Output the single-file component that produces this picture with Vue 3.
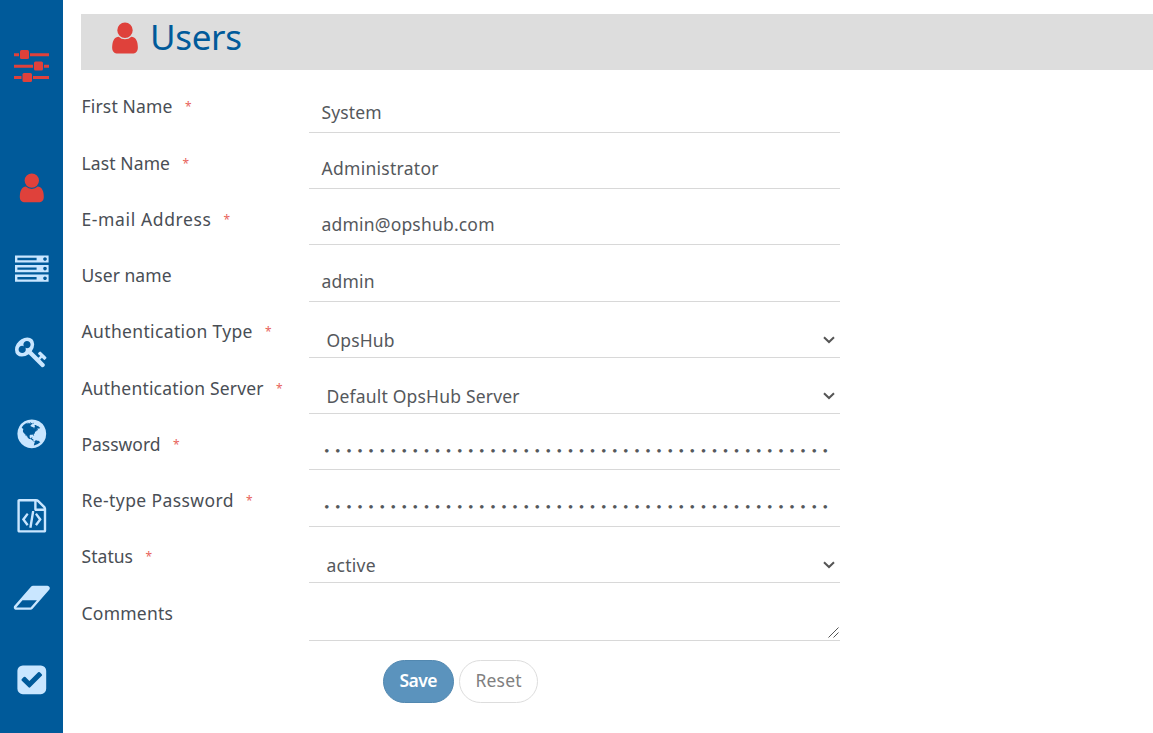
<script setup>
const icons = {
  user: 'M1536 1399q0 109-62.5 187t-150.5 78h-854q-88 0-150.5-78t-62.5-187q0-85 8.5-160.5t31.5-152 58.5-131 94-89 134.5-34.5q131 128 313 128t313-128q76 0 134.5 34.5t94 89 58.5 131 31.5 152 8.5 160.5zm-256-887q0 159-112.5 271.5t-271.5 112.5-271.5-112.5-112.5-271.5 112.5-271.5 271.5-112.5 271.5 112.5 112.5 271.5z',
  server: 'M128 1408h1024v-128h-1024v128zm0-512h1024v-128h-1024v128zm1568 448q0-40-28-68t-68-28-68 28-28 68 28 68 68 28 68-28 28-68zm-1568-960h1024v-128h-1024v128zm1568 448q0-40-28-68t-68-28-68 28-28 68 28 68 68 28 68-28 28-68zm0-512q0-40-28-68t-68-28-68 28-28 68 28 68 68 28 68-28 28-68zm96 832v384h-1792v-384h1792zm0-512v384h-1792v-384h1792zm0-512v384h-1792v-384h1792z',
  key: 'M832 512q0-80-56-136t-136-56-136 56-56 136q0 42 19 83-41-19-83-19-80 0-136 56t-56 136 56 136 136 56 136-56 56-136q0-42-19-83 41 19 83 19 80 0 136-56t56-136zm851 704q0 17-49 66t-66 49q-9 0-28.5-16t-36.5-33-38.5-40-24.5-26l-96 96 220 220q28 28 28 68 0 42-39 81t-81 39q-40 0-68-28l-671-671q-176 131-365 131-163 0-265.5-102.5t-102.5-265.5q0-160 95-313t248-248 313-95q163 0 265.5 102.5t102.5 265.5q0 189-131 365l355 355 96-96q-3-3-26-24.5t-40-38.5-33-36.5-16-28.5q0-17 49-66t66-49q13 0 23 10 6 6 46 44.5t82 79.5 86.5 86 73 78 28.5 41z',
  globe: 'M896 128q209 0 385.5 103t279.5 279.5 103 385.5-103 385.5-279.5 279.5-385.5 103-385.5-103-279.5-279.5-103-385.5 103-385.5 279.5-279.5 385.5-103zm274 521q-2 1-9.5 9.5t-13.5 9.5q2 0 4.5-5t5-11 3.5-7q6-7 22-15 14-6 52-12 34-8 51 11-2-2 9.5-13t14.5-12q3-2 15-4.5t15-7.5l2-22q-12 1-17.5-7t-6.5-21q0 2-6 8 0-7-4.5-8t-11.5 1-9 1q-10-3-15-7.5t-8-16.5-4-15q-2-5-9.5-11t-9.5-10q-1-2-2.5-5.5t-3-6.5-4-5.5-5.5-2.5-7 5-7.5 10-4.5 5q-3-2-6-1.5t-4.5 1-4.5 3-5 3.5q-3 2-8.5 3t-8.5 2q15-5-1-11-10-4-16-3 9-4 7.5-12t-8.5-14h5q-1-4-8.5-8.5t-17.5-8.5-13-6q-8-5-34-9.5t-33-.5q-5 6-4.5 10.5t4 14 3.5 12.5q1 6-5.5 13t-6.5 12q0 7 14 15.5t10 21.5q-3 8-16 16t-16 12q-5 8-1.5 18.5t10.5 16.5q2 2 1.5 4t-3.5 4.5-5.5 4-6.5 3.5l-3 2q-11 5-20.5-6t-13.5-26q-7-25-16-30-23-8-29 1-5-13-41-26-25-9-58-4 6-1 0-15-7-15-19-12 3-6 4-17.5t1-13.5q3-13 12-23 1-1 7-8.5t9.5-13.5.5-6q35 4 50-11 5-5 11.5-17t10.5-17q9-6 14-5.5t14.5 5.5 14.5 5q14 1 15.5-11t-7.5-20q12 1 3-17-4-7-8-9-12-4-27 5-8 4 2 8-1-1-9.5 10.5t-16.5 17.5-16-5q-1-1-5.5-13.5t-9.5-13.5q-8 0-16 15 3-8-11-15t-24-8q19-12-8-27-7-4-20.5-5t-19.5 4q-5 7-5.5 11.5t5 8 10.5 5.5 11.5 4 8.5 3q14 10 8 14-2 1-8.5 3.5t-11.5 4.5-6 4q-3 4 0 14t-2 14q-5-5-9-17.5t-7-16.5q7 9-25 6l-10-1q-4 0-16 2t-20.5 1-13.5-8q-4-8 0-20 1-4 4-2-4-3-11-9.5t-10-8.5q-46 15-94 41 6 1 12-1 5-2 13-6.5t10-5.5q34-14 42-7l5-5q14 16 20 25-7-4-30-1-20 6-22 12 7 12 5 18-4-3-11.5-10t-14.5-11-15-5q-16 0-22 1-146 80-235 222 7 7 12 8 4 1 5 9t2.5 11 11.5-3q9 8 3 19 1-1 44 27 19 17 21 21 3 11-10 18-1-2-9-9t-9-4q-3 5 .5 18.5t10.5 12.5q-7 0-9.5 16t-2.5 35.5-1 23.5l2 1q-3 12 5.5 34.5t21.5 19.5q-13 3 20 43 6 8 8 9 3 2 12 7.5t15 10 10 10.5q4 5 10 22.5t14 23.5q-2 6 9.5 20t10.5 23q-1 0-2.5 1t-2.5 1q3 7 15.5 14t15.5 13q1 3 2 10t3 11 8 2q2-20-24-62-15-25-17-29-3-5-5.5-15.5t-4.5-14.5q2 0 6 1.5t8.5 3.5 7.5 4 2 3q-3 7 2 17.5t12 18.5 17 19 12 13q6 6 14 19.5t0 13.5q9 0 20 10.5t17 19.5q5 8 8 26t5 24q2 7 8.5 13.5t12.5 9.5l16 8 13 7q5 2 18.5 10.5t21.5 11.5q10 4 16 4t14.5-2.5 13.5-3.5q15-2 29 15t21 21q36 19 55 11-2 1 .5 7.5t8 15.5 9 14.5 5.5 8.5q5 6 18 15t18 15q6-4 7-9-3 8 7 20t18 10q14-3 14-32-31 15-49-18 0-1-2.5-5.5t-4-8.5-2.5-8.5 0-7.5 5-3q9 0 10-3.5t-2-12.5-4-13q-1-8-11-20t-12-15q-5 9-16 8t-16-9q0 1-1.5 5.5t-1.5 6.5q-13 0-15-1 1-3 2.5-17.5t3.5-22.5q1-4 5.5-12t7.5-14.5 4-12.5-4.5-9.5-17.5-2.5q-19 1-26 20-1 3-3 10.5t-5 11.5-9 7q-7 3-24 2t-24-5q-13-8-22.5-29t-9.5-37q0-10 2.5-26.5t3-25-5.5-24.5q3-2 9-9.5t10-10.5q2-1 4.5-1.5t4.5 0 4-1.5 3-6q-1-1-4-3-3-3-4-3 7 3 28.5-1.5t27.5 1.5q15 11 22-2 0-1-2.5-9.5t-.5-13.5q5 27 29 9 3 3 15.5 5t17.5 5q3 2 7 5.5t5.5 4.5 5-.5 8.5-6.5q10 14 12 24 11 40 19 44 7 3 11 2t4.5-9.5 0-14-1.5-12.5l-1-8v-18l-1-8q-15-3-18.5-12t1.5-18.5 15-18.5q1-1 8-3.5t15.5-6.5 12.5-8q21-19 15-35 7 0 11-9-1 0-5-3t-7.5-5-4.5-2q9-5 2-16 5-3 7.5-11t7.5-10q9 12 21 2 8-8 1-16 5-7 20.5-10.5t18.5-9.5q7 2 8-2t1-12 3-12q4-5 15-9t13-5l17-11q3-4 0-4 18 2 31-11 10-11-6-20 3-6-3-9.5t-15-5.5q3-1 11.5-.5t10.5-1.5q15-10-7-16-17-5-43 12zm-163 877q206-36 351-189-3-3-12.5-4.5t-12.5-3.5q-18-7-24-8 1-7-2.5-13t-8-9-12.5-8-11-7q-2-2-7-6t-7-5.5-7.5-4.5-8.5-2-10 1l-3 1q-3 1-5.5 2.5t-5.5 3-4 3 0 2.5q-21-17-36-22-5-1-11-5.5t-10.5-7-10-1.5-11.5 7q-5 5-6 15t-2 13q-7-5 0-17.5t2-18.5q-3-6-10.5-4.5t-12 4.5-11.5 8.5-9 6.5-8.5 5.5-8.5 7.5q-3 4-6 12t-5 11q-2-4-11.5-6.5t-9.5-5.5q2 10 4 35t5 38q7 31-12 48-27 25-29 40-4 22 12 26 0 7-8 20.5t-7 21.5q0 6 2 16z',
  code: 'M1596 380q28 28 48 76t20 88v1152q0 40-28 68t-68 28h-1344q-40 0-68-28t-28-68v-1600q0-40 28-68t68-28h896q40 0 88 20t76 48zm-444-244v376h376q-10-29-22-41l-313-313q-12-12-41-22zm384 1528v-1024h-416q-40 0-68-28t-28-68v-416h-768v1536h1280zm-928-896q8-11 21-12.5t24 6.5l51 38q11 8 12.5 21t-6.5 24l-182 243 182 243q8 11 6.5 24t-12.5 21l-51 38q-11 8-24 6.5t-21-12.5l-226-301q-14-19 0-38zm802 301q14 19 0 38l-226 301q-8 11-21 12.5t-24-6.5l-51-38q-11-8-12.5-21t6.5-24l182-243-182-243q-8-11-6.5-24t12.5-21l51-38q11-8 24-6.5t21 12.5zm-620 461q-13-2-20.5-13t-5.5-24l138-831q2-13 13-20.5t24-5.5l63 10q13 2 20.5 13t5.5 24l-138 831q-2 13-13 20.5t-24 5.5z',
  eraser: 'M832 1408l336-384h-768l-336 384h768zm1013-1077q15 34 9.5 71.5t-30.5 65.5l-896 1024q-38 44-96 44h-768q-38 0-69.5-20.5t-47.5-54.5q-15-34-9.5-71.5t30.5-65.5l896-1024q38-44 96-44h768q38 0 69.5 20.5t47.5 54.5z',
  check: 'M813 1299l614-614q19-19 19-45t-19-45l-102-102q-19-19-45-19t-45 19l-467 467-211-211q-19-19-45-19t-45 19l-102 102q-19 19-19 45t19 45l358 358q19 19 45 19t45-19zm851-883v960q0 119-84.5 203.5t-203.5 84.5h-960q-119 0-203.5-84.5t-84.5-203.5v-960q0-119 84.5-203.5t203.5-84.5h960q119 0 203.5 84.5t84.5 203.5z',
}
const nav = ['user', 'server', 'key', 'globe', 'code', 'eraser', 'check']
const dots = '•'.repeat(46)
const fields = [
  { label: 'First Name', lw: 91, req: true, value: 'System', vw: 60 },
  { label: 'Last Name', lw: 88.5, req: true, value: 'Administrator', vw: 117 },
  { label: 'E-mail Address', lw: 129.5, req: true, value: 'admin@opshub.com', vw: 173 },
  { label: 'User name', lw: 90, value: 'admin', vw: 53 },
  { label: 'Authentication Type', lw: 171, req: true, kind: 'select', value: 'OpsHub', vw: 68 },
  { label: 'Authentication Server', lw: 182, req: true, kind: 'select', value: 'Default OpsHub Server', vw: 193 },
  { label: 'Password', lw: 79, req: true, kind: 'secret', value: dots, vw: 504 },
  { label: 'Re-type Password', lw: 152, req: true, kind: 'secret', value: dots, vw: 504 },
  { label: 'Status', lw: 51.5, req: true, kind: 'select', value: 'active', vw: 49 },
  { label: 'Comments', lw: 91.5, kind: 'area', value: '', vw: 0 },
]

// Tracks the text out or in so that it fills the given width.
const vFit = {
  mounted(el, { value }) {
    const n = el.textContent.length
    if (n < 2 || !value) return
    const natural = el.getBoundingClientRect().width
    const gap = (value - natural) / (n - 1)
    el.style.letterSpacing = gap + 'px'
    el.style.marginRight = -gap + 'px'
  },
}
</script>

<template>
  <div class="page">
    <nav class="side">
      <div class="brand">
        <svg width="35" height="32" viewBox="0 0 35 32">
          <path d="M0 3.2h5v3H0zM16 3.2h19v3H16zM0 14.7h19v3H0zM30 14.7h5v3h-5zM0 26h7.500v3H0zM19 26h16v3H19z" />
          <rect x="6" y="0" width="9" height="9" rx="1.5" />
          <rect x="20" y="11.600" width="9" height="9" rx="1.500" />
          <rect x="8.500" y="23" width="9.500" height="9" rx="1.500" />
        </svg>
      </div>
      <div v-for="name in nav" :key="name" class="item" :class="{ on: name === 'user' }">
        <svg class="ico" viewBox="0 0 1792 1792"><path :d="icons[name]" /></svg>
      </div>
    </nav>
    <main class="main">
      <header class="head">
        <svg class="headico" viewBox="0 0 1792 1792"><path :d="icons.user" /></svg>
        <h1><span v-fit="92">Users</span></h1>
      </header>
      <section class="form">
        <div v-for="f in fields" :key="f.label" class="row" :class="f.kind">
          <label class="label"><span v-fit="f.lw">{{ f.label }}</span><span v-if="f.req" class="req">*</span></label>
          <div class="control">
            <span v-if="f.value" v-fit="f.vw" class="value">{{ f.value }}</span>
            <svg v-if="f.kind === 'select'" class="chev" width="12" height="8" viewBox="0 0 12 8"><path d="M1 1.200l5 4.800 5-4.800" /></svg>
            <svg v-if="f.kind === 'area'" class="grip" width="11" height="11" viewBox="0 0 11 11"><path d="M.5 10.500l10-10M5.500 10.500l5-5" /></svg>
          </div>
        </div>
      </section>
      <div class="actions">
        <button class="btn save"><span v-fit="38">Save</span></button>
        <button class="btn reset"><span v-fit="46">Reset</span></button>
      </div>
    </main>
  </div>
</template>

<style>
body { background: #fff; overflow: hidden; }
</style>

<style scoped>
.page { display: flex; height: 733px; font-family: "Noto Sans", "Open Sans", sans-serif; font-size: 17.500px; color: #494e55; }
.side { width: 63px; flex: none; background: #005a9a; overflow: hidden; }
.brand { height: 97.200px; box-sizing: content-box; padding-top: 50px; display: flex; justify-content: center; align-items: flex-start; fill: #df413b; }
.item { height: 82px; display: flex; align-items: center; justify-content: center; fill: #c9e6ff; }
.item.on { fill: #df413b; }
.ico { width: 33.600px; height: 33.600px; overflow: visible; }
.main { flex: 1; padding: 14px 0 0 18px; min-width: 0; }
.head { height: 56px; box-sizing: border-box; background: #ddd; display: flex; align-items: flex-start; padding: 0 0 0 26px; }
.headico { width: 36px; height: 36px; margin-top: 6px; fill: #df413b; }
h1 { margin: 0 0 0 7px; font-weight: 400; font-size: 35px; line-height: 46px; color: #005a9a; }
.form { padding-top: 6.600px; }
.row { display: flex; height: 56.250px; }
.label { width: 228px; padding: 18.700px 0 0 .5px; box-sizing: border-box; line-height: 22px; white-space: nowrap; }
.req { margin-left: 12.500px; font-size: 12px; line-height: 1; position: relative; top: -2px; color: #e8635c; }
.control { width: 531px; height: 56.250px; box-sizing: border-box; border-bottom: 1px solid #d8d8d8; position: relative; padding: 24.200px 0 0 12.500px; line-height: 22px; white-space: nowrap; color: #55585c; }
.value { display: inline-block; }
.select .control { padding: 27px 0 0 17.500px; }
.chev { position: absolute; right: 5px; bottom: 13px; fill: none; stroke: #555; stroke-width: 2; }
.secret .control { padding: 25.700px 0 0 15px; font-family: Lato, sans-serif; font-size: 9.500px; }
.area, .area .control { height: 58px; }
.grip { position: absolute; right: 1px; bottom: 2px; fill: none; stroke: #555; stroke-width: 1; }
.actions { display: flex; gap: 5px; padding: 19.150px 0 0 302px; }
.btn { height: 43px; box-sizing: border-box; border-radius: 22px; padding: 0 0 3px; font: inherit; text-align: center; white-space: nowrap; }
.save { width: 71px; background: #5b93bd; border: 1px solid #5288b0; color: #fff; font-weight: 600; }
.reset { width: 79px; background: #fff; border: 1px solid #ddd; color: #808080; }
</style>
